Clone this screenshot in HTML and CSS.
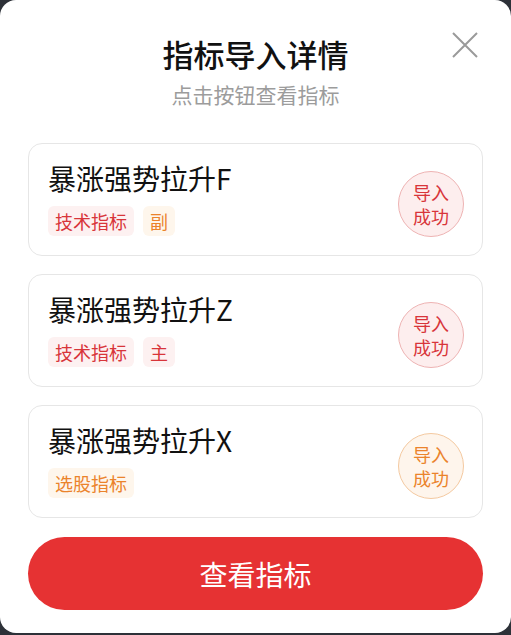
FILE: index.html
```html
<!DOCTYPE html>
<html lang="zh-CN">
<head>
<meta charset="UTF-8">
<meta name="viewport" content="width=device-width, initial-scale=1.0">
<title>指标导入详情</title>
<link rel="stylesheet" href="styles.css">
</head>
<body>

<div class="dialog">
    <button class="close-btn" aria-label="关闭">
        <svg width="26" height="26" viewBox="0 0 26 26">
            <path d="M1 1 L25 25 M25 1 L1 25" stroke="#9a9a9a" stroke-width="2" fill="none"/>
        </svg>
    </button>

    <header class="dialog-header">
        <h1>指标导入详情</h1>
        <p>点击按钮查看指标</p>
    </header>

    <div class="card-list">
        <div class="card">
            <div class="card-info">
                <h2>暴涨强势拉升F</h2>
                <div class="tags">
                    <span class="tag tag-red">技术指标</span>
                    <span class="tag tag-orange">副</span>
                </div>
            </div>
            <div class="status status-red">导入<br>成功</div>
        </div>
        <div class="card">
            <div class="card-info">
                <h2>暴涨强势拉升Z</h2>
                <div class="tags">
                    <span class="tag tag-red">技术指标</span>
                    <span class="tag tag-red">主</span>
                </div>
            </div>
            <div class="status status-red">导入<br>成功</div>
        </div>
        <div class="card">
            <div class="card-info">
                <h2>暴涨强势拉升X</h2>
                <div class="tags">
                    <span class="tag tag-orange">选股指标</span>
                </div>
            </div>
            <div class="status status-orange">导入<br>成功</div>
        </div>
    </div>

    <button class="main-btn">查看指标</button>
</div>

</body>
</html>
```

FILE: styles.css
```css
/* Global styles */
body {
    font-family: "Noto Sans CJK SC", "Noto Sans", sans-serif;
    margin: 0;
    padding: 0;
    background-color: #2d3138;
}
.dialog {
    position: relative;
    box-sizing: border-box;
    width: 511px;
    height: 633px;
    background-color: #fff;
    border-radius: 16px;
    padding: 34px 28px 0;
}
.close-btn {
    position: absolute;
    top: 32px;
    right: 33px;
    width: 26px;
    height: 26px;
    padding: 0;
    border: none;
    background: none;
}
.close-btn svg {
    display: block;
}
.dialog-header {
    text-align: center;
}
.dialog-header h1 {
    margin: 0;
    font-size: 31px;
    line-height: 40px;
    font-weight: 500;
    color: #111;
}
.dialog-header p {
    margin: 6px 0 0;
    font-size: 21px;
    line-height: 28px;
    color: #9c9c9c;
}
.card-list {
    margin-top: 35px;
    display: flex;
    flex-direction: column;
    gap: 18px;
}
.card {
    box-sizing: border-box;
    height: 113px;
    border: 1px solid #e6e6e6;
    border-radius: 14px;
    padding: 16px 18px 0 19px;
    display: flex;
    justify-content: space-between;
    align-items: flex-start;
}
.card-info h2 {
    margin: 0;
    font-size: 28px;
    line-height: 36px;
    font-weight: 400;
    color: #111;
}
.tags {
    margin-top: 10px;
    display: flex;
    gap: 9px;
}
.tag {
    height: 30px;
    line-height: 30px;
    padding: 0 7px;
    border-radius: 6px;
    font-size: 18px;
}
.tag-red {
    background-color: #fdf1f1;
    color: #d8353a;
}
.tag-orange {
    background-color: #fef6ec;
    color: #eb832b;
}
.status {
    margin-top: 11px;
    box-sizing: border-box;
    width: 66px;
    height: 66px;
    border-radius: 50%;
    display: flex;
    align-items: center;
    justify-content: center;
    text-align: center;
    font-size: 18px;
    line-height: 24px;
}
.status-red {
    background-color: #fdeeee;
    border: 1px solid #eeb3b3;
    color: #d8353a;
}
.status-orange {
    background-color: #fef5ec;
    border: 1px solid #f4c9a0;
    color: #eb832b;
}
.main-btn {
    display: block;
    width: 100%;
    height: 73px;
    margin-top: 19px;
    border: none;
    border-radius: 37px;
    background-color: #e63233;
    color: #fff;
    font-family: inherit;
    font-size: 28px;
}
```
